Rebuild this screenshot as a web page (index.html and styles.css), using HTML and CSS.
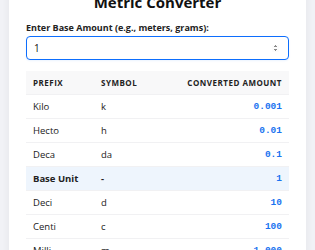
FILE: index.html
```
<!DOCTYPE html>
<html>
	<head>
		<meta charset="UTF-8">
		<title>Metric Converter</title>
		<link rel="stylesheet" href="styles.css">
	</head>
	<body>
		<div class="card">
			<h1 class="title">Metric Converter</h1>
			<label class="label" for="amount">Enter Base Amount (e.g., meters, grams):</label>
			<input id="amount" class="amount" type="number" value="1" autofocus>

			<table class="units">
				<thead>
					<tr>
						<th class="col_prefix">Prefix</th>
						<th>Symbol</th>
						<th class="num">Converted Amount</th>
					</tr>
				</thead>
				<tbody>
					<tr><td>Kilo</td><td>k</td><td class="num val">0.001</td></tr>
					<tr><td>Hecto</td><td>h</td><td class="num val">0.01</td></tr>
					<tr><td>Deca</td><td>da</td><td class="num val">0.1</td></tr>
					<tr class="base"><td>Base Unit</td><td>-</td><td class="num val">1</td></tr>
					<tr><td>Deci</td><td>d</td><td class="num val">10</td></tr>
					<tr><td>Centi</td><td>c</td><td class="num val">100</td></tr>
					<tr><td>Milli</td><td>m</td><td class="num val">1,000</td></tr>
				</tbody>
			</table>
		</div>
	</body>
</html>
```
FILE: styles.css
```
* {
	margin: 0;
	padding: 0;
	box-sizing: border-box;
}
body {
	background: #f1f2f6;
	font-family: "Open Sans", "Noto Sans", sans-serif;
	color: #222;
	padding: 0 9px;
	overflow: hidden;
}

.card {
	background: #fff;
	margin-top: -12px;
	padding: 0 17px 20px;
	box-shadow: 0 2px 8px rgba(0, 0, 0, .06);
}

.title {
	font-size: 15px;
	line-height: 17px;
	font-weight: 700;
	text-align: center;
	color: #111;
	padding-top: 6px;
	margin-bottom: 10px;
}

.label {
	display: block;
	font-size: 9px;
	font-weight: 700;
	line-height: 13px;
	color: #222;
	margin-bottom: 2px;
}

.amount {
	display: block;
	width: 100%;
	height: 24px;
	border: 1.5px solid #0d6efd;
	border-radius: 4px;
	padding: 0 5px 0 7px;
	font-family: "Open Sans", sans-serif;
	font-size: 10px;
	color: #111;
	outline: none;
	box-shadow: 0 1px 2px rgba(13, 110, 253, .08);
}
.amount::-webkit-inner-spin-button {
	opacity: 1;
	transform: scale(.5);
}

.units {
	width: 100%;
	border-collapse: collapse;
	margin-top: 11px;
}
.units th {
	background: #f8f8f9;
	font-size: 8px;
	font-weight: 700;
	letter-spacing: .5px;
	text-transform: uppercase;
	color: #222;
	text-align: left;
	height: 23px;
	padding: 0 7px;
}
.units td {
	font-size: 9.5px;
	height: 24px;
	padding: 0 7px;
	border-top: 1px solid #f1f1f3;
}
.col_prefix {
	width: 68px;
}
.units .num {
	text-align: right;
}
.val {
	font-family: "Liberation Mono", "DejaVu Sans Mono", monospace;
	font-size: 8px;
	font-weight: 700;
	color: #1a73f0;
}
.base td {
	background: #eef5fd;
	font-weight: 700;
}
```
